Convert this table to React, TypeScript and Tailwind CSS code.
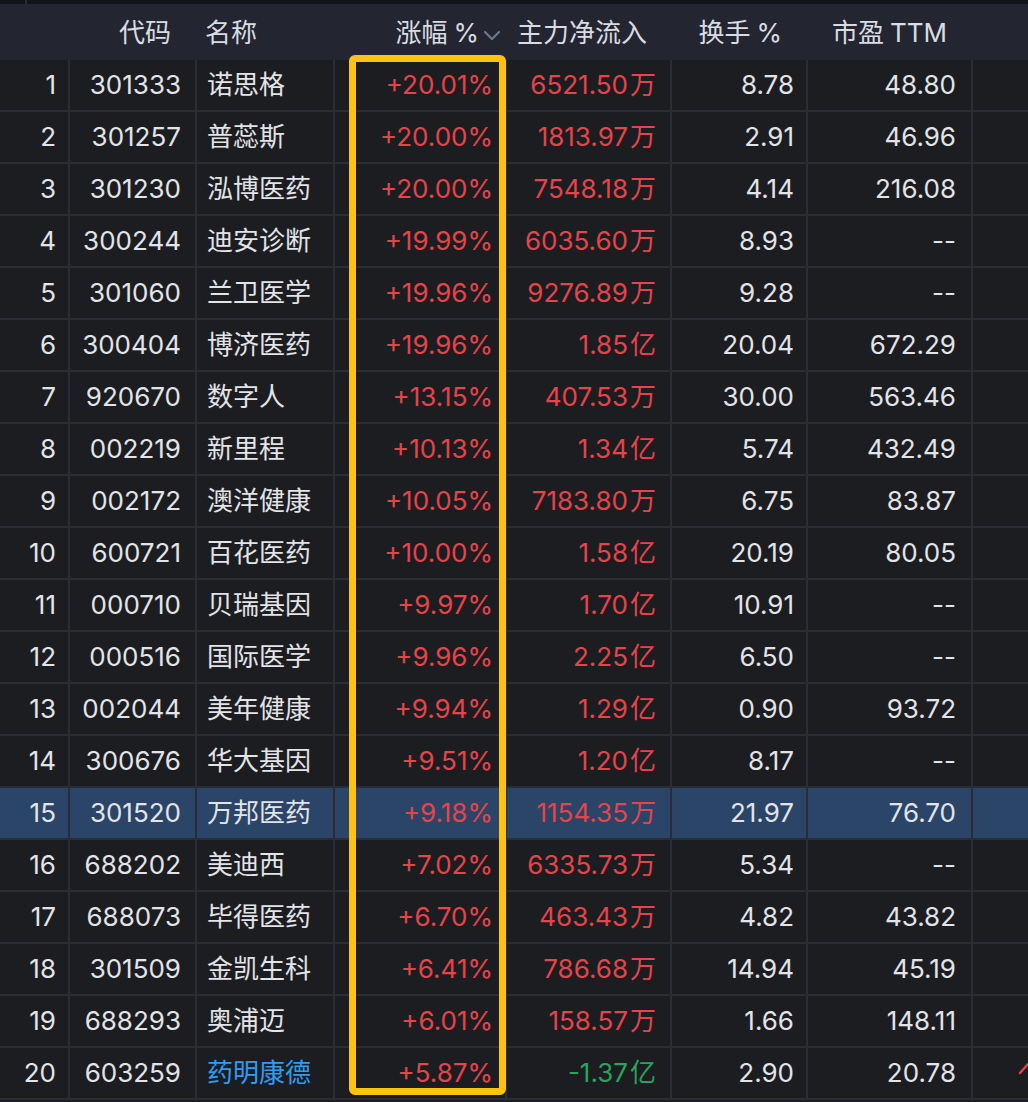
import React from "react";

type Row = {
  code: string;
  name: string;
  pct: string;
  flow: string;
  flowNeg?: boolean;
  turn: string;
  pe: string;
  blue?: boolean;
};

const rows: Row[] = [
  { code: "301333", name: "诺思格", pct: "+20.01%", flow: "6521.50万", turn: "8.78", pe: "48.80" },
  { code: "301257", name: "普蕊斯", pct: "+20.00%", flow: "1813.97万", turn: "2.91", pe: "46.96" },
  { code: "301230", name: "泓博医药", pct: "+20.00%", flow: "7548.18万", turn: "4.14", pe: "216.08" },
  { code: "300244", name: "迪安诊断", pct: "+19.99%", flow: "6035.60万", turn: "8.93", pe: "--" },
  { code: "301060", name: "兰卫医学", pct: "+19.96%", flow: "9276.89万", turn: "9.28", pe: "--" },
  { code: "300404", name: "博济医药", pct: "+19.96%", flow: "1.85亿", turn: "20.04", pe: "672.29" },
  { code: "920670", name: "数字人", pct: "+13.15%", flow: "407.53万", turn: "30.00", pe: "563.46" },
  { code: "002219", name: "新里程", pct: "+10.13%", flow: "1.34亿", turn: "5.74", pe: "432.49" },
  { code: "002172", name: "澳洋健康", pct: "+10.05%", flow: "7183.80万", turn: "6.75", pe: "83.87" },
  { code: "600721", name: "百花医药", pct: "+10.00%", flow: "1.58亿", turn: "20.19", pe: "80.05" },
  { code: "000710", name: "贝瑞基因", pct: "+9.97%", flow: "1.70亿", turn: "10.91", pe: "--" },
  { code: "000516", name: "国际医学", pct: "+9.96%", flow: "2.25亿", turn: "6.50", pe: "--" },
  { code: "002044", name: "美年健康", pct: "+9.94%", flow: "1.29亿", turn: "0.90", pe: "93.72" },
  { code: "300676", name: "华大基因", pct: "+9.51%", flow: "1.20亿", turn: "8.17", pe: "--" },
  { code: "301520", name: "万邦医药", pct: "+9.18%", flow: "1154.35万", turn: "21.97", pe: "76.70" },
  { code: "688202", name: "美迪西", pct: "+7.02%", flow: "6335.73万", turn: "5.34", pe: "--" },
  { code: "688073", name: "毕得医药", pct: "+6.70%", flow: "463.43万", turn: "4.82", pe: "43.82" },
  { code: "301509", name: "金凯生科", pct: "+6.41%", flow: "786.68万", turn: "14.94", pe: "45.19" },
  { code: "688293", name: "奥浦迈", pct: "+6.01%", flow: "158.57万", turn: "1.66", pe: "148.11" },
  { code: "603259", name: "药明康德", pct: "+5.87%", flow: "-1.37亿", flowNeg: true, turn: "2.90", pe: "20.78", blue: true },
];

const FONT = { fontFamily: 'Inter, "Noto Sans CJK SC", sans-serif' };

function Flow({ v }: { v: string }) {
  const unit = v.slice(-1);
  const num = v.slice(0, -1);
  return (
    <span>
      {num}
      <span className="ml-[2px]">{unit}</span>
    </span>
  );
}

export default function App() {
  return (
    <div className="relative w-[1028px] h-[1102px] overflow-hidden bg-[#1c1d21] text-[26px] leading-none text-[#e2e4e8]" style={FONT}>
      {/* top strip */}
      <div className="h-[4px] bg-[#131417] flex">
        <div className="w-[27px] border-r-2 border-[#2a2c33]" />
      </div>
      {/* header */}
      <div className="grid grid-cols-[70px_127px_138px_172px_165px_136px_165px_55px] h-[56px] pt-[2px] bg-[#232630] text-[#d9dce2] items-center">
        <div />
        <div className="text-right pr-[26px]">代码</div>
        <div className="pl-[8px]">名称</div>
        <div className="flex items-center justify-end pr-[6px]">
          <span>涨幅<span className="ml-[6px]">%</span></span>
          <svg width="18" height="12" viewBox="0 0 18 12" className="ml-[4px] mt-[6px]">
            <path d="M2 2 L9 9 L16 2" fill="none" stroke="#6b788d" strokeWidth="2.2" strokeLinecap="round" strokeLinejoin="round" />
          </svg>
        </div>
        <div className="text-right pr-[25px] whitespace-nowrap">主力净流入</div>
        <div className="text-right pr-[26px] whitespace-nowrap">换手<span className="ml-[6px]">%</span></div>
        <div className="text-right pr-[26px] whitespace-nowrap">市盈<span className="ml-[6px]">TTM</span></div>
        <div />
      </div>
      {/* rows */}
      {rows.map((r, i) => {
        const hl = i === 14;
        const bg = hl ? "bg-[#2a4567]" : "bg-[#1c1d21]";
        const cell = `h-[50px] flex items-center border-r-2 border-[#2a2d35] ${bg}`;
        return (
          <div
            key={r.code}
            className="grid grid-cols-[70px_127px_138px_172px_165px_136px_165px_55px] border-b-2 border-[#2a2d35]"
          >
            <div className={`${cell} justify-end pr-[12px]`}>{i + 1}</div>
            <div className={`${cell} justify-end pr-[14px]`}>{r.code}</div>
            <div className={`${cell} pl-[10px] ${r.blue ? "text-[#2f9cf2]" : ""}`}>{r.name}</div>
            <div className={`${cell} justify-end pr-[12px] text-[#e6434a]`}>{r.pct}</div>
            <div className={`${cell} justify-end pr-[14px] whitespace-nowrap ${r.flowNeg ? "text-[#2aa35c]" : "text-[#e6434a]"}`}>
              <Flow v={r.flow} />
            </div>
            <div className={`${cell} justify-end pr-[12px]`}>{r.turn}</div>
            <div className={`${cell} justify-end pr-[15px]`}>{r.pe}</div>
            <div className={`h-[50px] flex items-center justify-end ${bg} overflow-hidden`}>
              {i === 19 && (
                <svg width="12" height="14" viewBox="0 0 12 14" className="mr-[-2px] mt-[-10px]">
                  <path d="M2 12 L10 3" stroke="#e6434a" strokeWidth="2.4" strokeLinecap="round" />
                </svg>
              )}
            </div>
          </div>
        );
      })}
      {/* highlight box overlay */}
      <div className="absolute left-[349px] top-[55px] w-[157px] h-[1040px] border-[7px] border-[#ffc20e] rounded-[6px] pointer-events-none" />
    </div>
  );
}
